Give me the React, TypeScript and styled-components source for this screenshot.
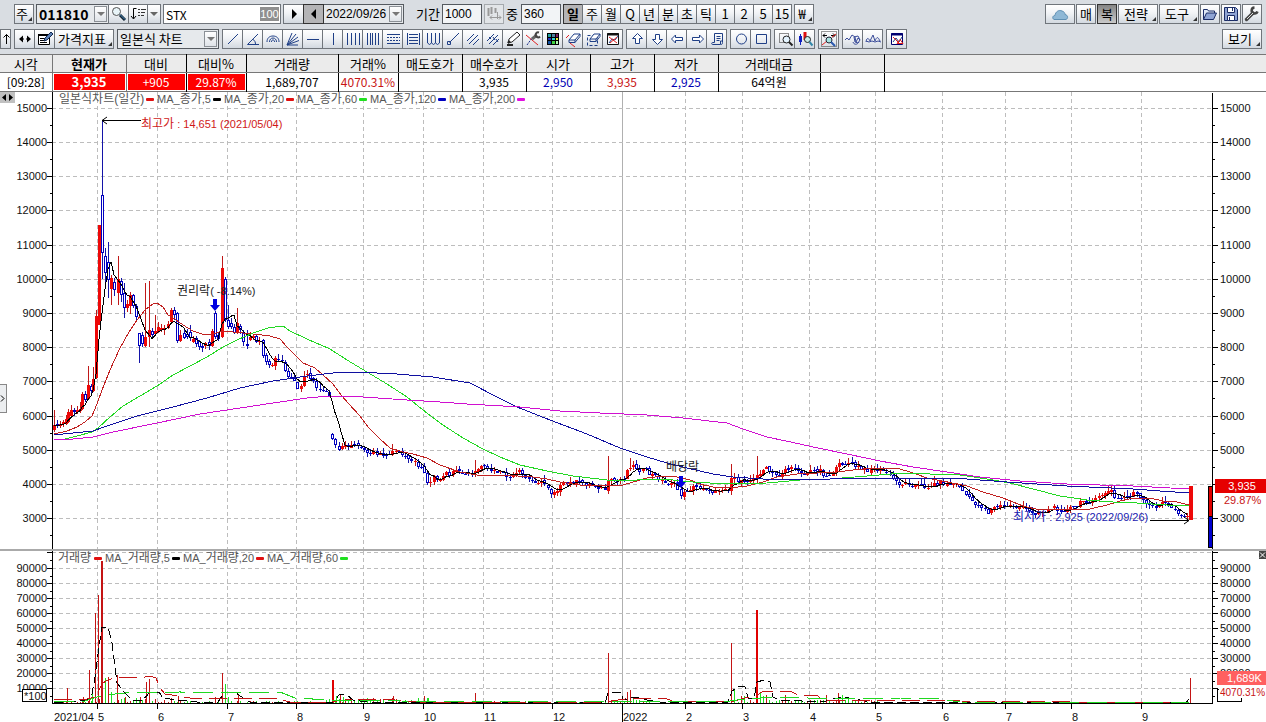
import React, { useLayoutEffect, useRef, useState } from "react";
import styled, { createGlobalStyle, css } from "styled-components";

const UI_FONT = '"Liberation Sans", "Noto Sans CJK KR", sans-serif';
const KR_FONT = '"Noto Sans CJK KR", sans-serif';

const Global = createGlobalStyle`
  *, *::before, *::after { box-sizing: border-box; }
  body { margin: 0; background: #fff; font-family: ${KR_FONT}; font-size: 13px; color: #000; }
  button, input, select { font: inherit; color: inherit; margin: 0; border-radius: 0; }
`;

/* ---------- toolbar parts ---------- */

const Page = styled.div`
  display: flex;
  flex-direction: column;
  min-width: 1200px;
`;

const Toolbars = styled.header`
  display: flex;
  flex-direction: column;
  gap: 5px;
  padding: 4px 4px 5px 0;
  background: #d9dde2;
`;

const Bar = styled.div<{ $gap: number; $start?: number }>`
  display: flex;
  gap: ${(p) => p.$gap}px;
  padding-left: ${(p) => p.$start ?? 0}px;
  height: 20px;
`;

const Group = styled.div`
  display: flex;
  > * + * {
    margin-left: -1px;
  }
`;

const EndGroup = styled.div`
  display: flex;
  gap: 1px;
  margin-left: auto;
`;

const ToolButton = styled.button<{ $w?: number; $tone?: "down" | "dark" | "off"; $menu?: boolean }>`
  position: relative;
  display: flex;
  align-items: center;
  justify-content: center;
  flex: none;
  width: ${(p) => p.$w ?? 21}px;
  height: 20px;
  padding: 0;
  overflow: hidden;
  border: 1px solid #70757b;
  background: linear-gradient(#ffffff, #f1f3f6 45%, #d3d9e0);
  line-height: 18px;
  white-space: nowrap;
  svg {
    flex: none;
  }
  ${(p) =>
    p.$tone === "down" &&
    css`
      background: #b4b4b6;
      border-color: #333;
      font-weight: 700;
    `}
  ${(p) =>
    p.$tone === "dark" &&
    css`
      background: linear-gradient(#858585, #c9c9c9);
      border-color: #333;
    `}
  ${(p) =>
    p.$tone === "off" &&
    css`
      background: #e2e5e8;
      border-color: #a5a9ad;
    `}
  ${(p) =>
    p.$menu &&
    css`
      padding-right: 4px;
      &::after {
        content: "";
        position: absolute;
        right: 1px;
        bottom: 2px;
        border-left: 4px solid transparent;
        border-bottom: 4px solid #333;
      }
    `}
`;

const PickerFrame = styled.span<{ $w: number; $soft?: boolean }>`
  display: flex;
  flex: none;
  align-items: center;
  width: ${(p) => p.$w}px;
  height: 20px;
  padding-right: 1px;
  border: 1px solid #555a60;
  background: ${(p) => (p.$soft ? "#e6e9ec" : "#fff")};
`;

const PickerSelect = styled.select<{ $code?: boolean; $narrow?: boolean }>`
  appearance: none;
  flex: 1;
  min-width: 0;
  height: 18px;
  padding: 0 0 0 2px;
  border: 0;
  background: transparent;
  line-height: 18px;
  ${(p) => p.$code && "font-size: 14px; font-weight: 700;"}
  ${(p) => p.$narrow && `font-family: ${UI_FONT}; font-size: 12px;`}
`;

const DropMark = styled.span`
  display: flex;
  flex: none;
  align-items: center;
  justify-content: center;
  width: 13px;
  height: 16px;
  border: 1px solid #8b9096;
  background: linear-gradient(#fff, #dfe3e8);
  &::after {
    content: "";
    border: 4px solid transparent;
    border-top-color: #777;
    border-bottom: 0;
  }
`;

const NameField = styled.label`
  display: flex;
  align-items: center;
  width: 118px;
  height: 20px;
  padding-right: 1px;
  border: 1px solid #70757b;
  background: #fff;
`;

const BareInput = styled.input`
  flex: 1;
  min-width: 0;
  height: 18px;
  padding: 0 2px;
  border: 0;
  background: transparent;
  font-size: 12px;
`;

const MarginTag = styled.span`
  width: 19px;
  height: 14px;
  background: #8f8f8f;
  color: #fff;
  font-family: ${UI_FONT};
  font-size: 11px;
  line-height: 14px;
  text-align: center;
`;

const NumberInput = styled.input`
  width: 40px;
  height: 20px;
  padding: 0 2px;
  border: 1px solid #555a60;
  background: #f2f4f6;
  font-family: ${UI_FONT};
  font-size: 12px;
`;

const FieldLabel = styled.label<{ $pad?: number; $w: number }>`
  width: ${(p) => p.$w}px;
  padding-left: ${(p) => p.$pad ?? 0}px;
  line-height: 19px;
  white-space: nowrap;
`;

/* ---------- quote table ---------- */

const QuoteTable = styled.table`
  width: 100%;
  table-layout: fixed;
  border-collapse: collapse;
  border-top: 1px solid #777;
  border-bottom: 1px solid #777;
`;

const edge = css<{ $gray?: boolean }>`
  border-right: 1px solid ${(p) => (p.$gray ? "#777" : "#000")};
  &:last-child {
    border-right: 0;
  }
`;

const HeadCell = styled.th<{ $gray?: boolean; $strong?: boolean }>`
  ${edge}
  height: 18px;
  padding: 0;
  border-bottom: 1px solid #777;
  background: #ebebeb;
  font-size: 13px;
  font-weight: ${(p) => (p.$strong ? 700 : 400)};
  line-height: 17px;
  white-space: nowrap;
`;

const ValueCell = styled.td<{ $gray?: boolean }>`
  ${edge}
  height: 19px;
  padding: 1px;
  text-align: center;
  font-size: 12px;
  line-height: 16px;
  white-space: nowrap;
`;

const Value = styled.span<{ $kind?: string }>`
  display: block;
  height: 16px;
  ${(p) => p.$kind === "up" && "background: #ff0000; color: #fff;"}
  ${(p) => p.$kind === "upStrong" && "background: #ff0000; color: #fff; font-weight: 700; font-size: 13px;"}
  ${(p) => p.$kind === "red" && "color: #c81414;"}
  ${(p) => p.$kind === "blue" && "color: #0000b4;"}
`;

/* ---------- chart frame ---------- */

const ChartArea = styled.main`
  position: relative;
`;

const PanelSvg = styled.svg`
  display: block;
  width: 100%;
  font-family: ${UI_FONT};
  font-size: 11px;
  font-kerning: none;
`;

const Divider = styled.div`
  height: 2px;
  background: #aaa;
`;

const ScrollHandle = styled.button`
  position: absolute;
  top: 0;
  left: 0;
  width: 15px;
  height: 11px;
  padding: 0;
  border: 0;
  background: #c0c0c0;
  svg {
    display: block;
  }
`;

const SideHandle = styled.button`
  position: absolute;
  top: 292px;
  left: 0;
  width: 7px;
  height: 29px;
  padding: 0;
  border: 1px solid #888;
  border-left: 0;
  background: #eceef0;
  svg {
    display: block;
  }
`;

/* ---------- icons ---------- */

const NAVY = "#1f3f86";

function Icon({ children }: { children: React.ReactNode }) {
  return (
    <svg width="18" height="18" viewBox="0 0 18 18" fill="none" stroke={NAVY} strokeWidth="1" aria-hidden="true">
      {children}
    </svg>
  );
}

const glyphs: Record<string, React.ReactNode> = {
  search: (
    <>
      <circle cx="6.5" cy="6.5" r="4" fill="#e8f4f8" stroke="#555" />
      <path d="M10 10l5 5" stroke="#123" strokeWidth="3" />
      <path d="M10 9.500l5 5" stroke="#4a90c0" />
    </>
  ),
  sort: (
    <>
      <path d="M4.500 3.500v10M2 11l2.500 3L7 11M4.500 3.500h3" stroke="#000" />
      <path d="M9 4.500h2M12 4.500h5M9 7.500h2M12 7.500h4M9 10.500h2M12 10.500h3" stroke="#333" />
    </>
  ),
  drop: <path d="M5 7h8l-4 4z" fill="#666" stroke="none" />,
  play: <path d="M7 4l5 5-5 5z" fill="#000" stroke="none" />,
  back: <path d="M11 4L6 9l5 5z" fill="#000" stroke="none" />,
  candlesOff: (
    <g stroke="#999">
      <path d="M3.500 3v8M6.500 2v7M10.500 3v5" strokeWidth="2" />
      <path d="M12.500 7v7M5 12.500h11M7 10.500l-2 2 2 2M14 10.500l2 2-2 2" />
    </g>
  ),
  cloud: (
    <path
      d="M3 14.500c-2-1-1.500-4 1-4 .5-4 4-6 7-4.500 2 .5 3 2 3 3.500 3 .5 3.500 4 1 5z"
      fill="#8fb8d6"
      stroke="#5f8fb3"
    />
  ),
  open: (
    <>
      <path d="M2.500 14.500v-10h4l1 1.500h6v2" stroke="#1b2c66" fill="#dfe8f6" />
      <path d="M2.500 14.500l3-6.500h10l-3 6.500z" fill="#8fa4d4" stroke="#1b2c66" />
    </>
  ),
  save: (
    <>
      <path d="M2.500 2.500h11l2 2v11h-13z" fill="#8fa4d4" stroke="#1b2c66" />
      <path d="M5.500 2.500h7v5h-7zM5.500 10.500h7v5h-7z" fill="#fff" stroke="#1b2c66" />
      <path d="M10.500 3v3M7.500 12v3" stroke="#1b2c66" />
    </>
  ),
  wrench: (
    <>
      <path d="M3.500 14.500L10 8" stroke="#444" strokeWidth="3.400" strokeLinecap="round" />
      <path d="M14.500 6.500a3 3 0 1 1-3-4" stroke="#444" strokeWidth="2.600" />
      <path d="M4 14l6-6" stroke="#ddd" />
    </>
  ),
  up: <path d="M9.500 14V4.500M6.500 7.500l3-3 3 3" stroke="#000" />,
  sides: (
    <>
      <path d="M3 9l4-3.500v7zM15 9l-4-3.500v7z" fill="#000" stroke="none" />
      <path d="M6 9h2M10 9h2" stroke="#000" />
    </>
  ),
  note: (
    <>
      <path d="M2.500 4.500h11v10h-11z" fill="#fff" stroke="#000" />
      <path d="M2 5h12" stroke="#000" strokeWidth="2" />
      <path d="M4 8.500h6M4 10.500h5M4 12.500h7" stroke="#000" />
      <path d="M8 11l1-3 6-6 2 2-6 6z" fill="#5b7fb5" stroke="#122850" />
    </>
  ),
  line: <path d="M4 14L14 4" />,
  angle: <path d="M14 4L3.500 14.500H15M9 9.500c2 1 2.500 3 2.500 5" />,
  arcs: <path d="M3 12c0-4 2.500-6 6-6s6 2 6 6M5.500 12c0-2.500 1.500-4 3.500-4s3.500 1.500 3.500 4M7.500 12c0-1.500.5-2 1.500-2s1.500.5 1.500 2" />,
  fan: <path d="M3 15L8 3M3 15l9-11M3 15l11-8M3 15l12-4.500M3 15h11" />,
  hline: <path d="M3 9.500h12" />,
  vline: <path d="M9.500 3v12" />,
  bars4: <path d="M3.500 3v12M7.500 3v12M11.500 3v12M15.500 3v12" />,
  bars5: <path d="M3.500 3v12M6.500 3v12M8.500 3v12M11.500 3v12M14.500 3v12" />,
  rows: (
    <>
      <path d="M3 4.500h13M3 13.500h13" />
      <path d="M3 7.500h13M3 10.500h13" strokeDasharray="2 1" />
    </>
  ),
  rows2: <path d="M3.500 3v12M15.500 3v12M5 4.500h9M5 7.500h9M5 10.500h9M5 13.500h9" />,
  cycle: <path d="M3.500 3v10M7.500 3v10M11.500 3v10M15.500 3v10M3.500 13l2 1.500 2-1.500 2 1.500 2-1.500 2 1.500 2-1.500" />,
  trend: <path d="M5.500 12.500L15 3M3.500 11.500h3v3h-3z" />,
  par3: <path d="M3 11l7-7M5 14l9-9M9 15l6-6" />,
  par3b: <path d="M3 11l7-7M5 14l9-9M9 15l6-6M5 7l2 2M9 7l2 3M12 9l2 3" />,
  pencil: (
    <>
      <path d="M4 13l1-4 8-7 3 3-8 7z" fill="#fff" stroke="#222" />
      <path d="M3 15h6M4 13l2-2" stroke="#222" strokeWidth="2" />
    </>
  ),
  xtool: (
    <>
      <path d="M2 5l12 10" stroke="#e02020" />
      <path d="M3 15l5-7" stroke="#1b2c86" strokeDasharray="2 1" />
      <path d="M8 9l5-4" stroke="#666" strokeWidth="3" />
      <path d="M15 2.500a2.500 2.500 0 1 0 1 4" stroke="#444" strokeWidth="2" />
    </>
  ),
  palette: (
    <>
      <path d="M3 3h12v12H3z" fill="#000" stroke="none" />
      <path d="M4 4h3v3H4z" fill="#20a0a0" stroke="none" />
      <path d="M8 4h3v3H8z" fill="#5080a0" stroke="none" />
      <path d="M12 4h2v3h-2z" fill="#802060" stroke="none" />
      <path d="M4 8h3v2H4z" fill="#2030c0" stroke="none" />
      <path d="M8 8h3v2H8z" fill="#30d0d0" stroke="none" />
      <path d="M12 8h2v2h-2z" fill="#e8e840" stroke="none" />
      <path d="M4 11h3v3H4z" fill="#1050a0" stroke="none" />
      <path d="M8 11h3v3H8z" fill="#40d040" stroke="none" />
      <path d="M12 11h2v3h-2z" fill="#b0ffb0" stroke="none" />
    </>
  ),
  erase: (
    <>
      <path d="M2 8l3-3M6 13l5 4" stroke="#e02020" />
      <path d="M5 10l5-6h6l-5 6z" fill="#fff" />
      <path d="M5 10v2.500h6l5-6V4M11 10v2.500" />
    </>
  ),
  eraseAll: (
    <>
      <path d="M3.500 5.500h10v10h-10z" strokeDasharray="3 2" />
      <path d="M6 9l4-5h6l-4 5z" fill="#fff" />
      <path d="M6 9v2.500h6l4-5V4M12 9v2.500" />
    </>
  ),
  chartX: (
    <>
      <path d="M3.500 3.500h11v11h-11z" fill="#fff" stroke="#111" />
      <path d="M3 4.500h12" stroke="#111" strokeWidth="2" />
      <path d="M5 13l3-4 3 1 3-4" />
      <path d="M5 7l8 6M13 7l-7 6" stroke="#e02020" />
    </>
  ),
  aUp: <path d="M9.500 3.500l5 5h-3v5h-4v-5h-3z" fill="#fff" />,
  aDown: <path d="M9.500 14.500l5-5h-3v-5h-4v5h-3z" fill="#fff" />,
  aLeft: <path d="M3.500 9l4-4v2.500h7v3h-7V13z" fill="#fff" />,
  aRight: <path d="M15.500 9l-4-4v2.500h-7v3h7V13z" fill="#fff" />,
  script: <path d="M6.500 3.500h8v9c0 2-1 2-2 2h-8c-1 0-1-2 0-2h2zM8.500 6.500h4M8.500 8.500h4M8.500 10.500h3M12.500 14v-3h2" />,
  circle: <circle cx="9.500" cy="9" r="5" />,
  square: <path d="M4.500 4.500h10v9h-10z" />,
  zoomArea: (
    <>
      <path d="M3.500 3.500h9v9h-9z" stroke="#222" strokeDasharray="1 1" />
      <circle cx="10.500" cy="9.500" r="3.500" fill="#e4f4ff" stroke="#222" />
      <path d="M13 12l3.500 3.500" stroke="#222" strokeWidth="2" />
    </>
  ),
  zoomCandle: (
    <>
      <path d="M4.500 4v11" stroke="#1020c0" />
      <path d="M4.500 6v6" stroke="#1020c0" strokeWidth="3" />
      <path d="M9 2v8" stroke="#e01010" strokeWidth="3" />
      <circle cx="11.500" cy="9.500" r="3" fill="#c8ece8" stroke="#222" />
      <path d="M13.500 12l3 3.500" stroke="#3388aa" strokeWidth="2" />
    </>
  ),
  zoomFit: (
    <>
      <path d="M1.500 1.500h15v15h-15z" stroke="#333" strokeDasharray="1 1" />
      <path d="M3 5.500h4M11 5.500h4M5 3.500l-2 2 2 2M13 3.500l2 2-2 2" stroke="#000" />
      <path d="M2 15l5-4M12 7l4-3" stroke="#e02020" />
      <circle cx="9" cy="10" r="3" fill="#a8e4e0" stroke="#223" />
      <path d="M11 12l4 4" stroke="#2a5ab0" strokeWidth="2" />
    </>
  ),
  waveEdit: <path d="M1 10l2-2 2 2 3-5 3 2 1 5 2-4 2 2M9 12c1 3 4 3 6 0M10 7l4-1 2 4-2 3-3-1z" stroke="#3a4c9a" />,
  wave: <path d="M2 12c1-6 3-3 4-1l3-6 2 6c2-5 3-4 5 0M2 11l3 1 3-1 3 1 3-1 3 1" stroke="#3a4c9a" />,
  indicator: (
    <>
      <path d="M3.500 3.500h11v11h-11z" fill="#fff" stroke="#000070" />
      <path d="M3 4.500h12" stroke="#000070" strokeWidth="2" />
      <path d="M5 12l3-4 3 4 3-5" />
      <path d="M5 7l6 6M9 13.500l3-4 3 4z" stroke="#e02020" />
    </>
  ),
};

function IconButton({ name, label, ...rest }: { name: string; label: string; $w?: number; $tone?: "down" | "dark" | "off"; $menu?: boolean }) {
  return (
    <ToolButton type="button" aria-label={label} {...rest}>
      <Icon>{glyphs[name]}</Icon>
    </ToolButton>
  );
}

const drawTools = [
  "line", "angle", "arcs", "fan", "hline", "vline", "bars4", "bars5", "rows", "rows2",
  "cycle", "trend", "par3", "par3b", "pencil", "xtool", "palette", "erase", "eraseAll", "chartX",
];
const periods = ["일", "주", "월", "Q", "년", "분", "초", "틱", "1", "2", "5", "15"];

/* ---------- data ---------- */

const quotes: { head: string; value: string; w?: number; kind?: string; gray?: boolean }[] = [
  { head: "시각", value: "[09:28]", w: 52, gray: true },
  { head: "현재가", value: "3,935", w: 74, kind: "upStrong", gray: true },
  { head: "대비", value: "+905", w: 60, kind: "up" },
  { head: "대비%", value: "29.87%", w: 60, kind: "up" },
  { head: "거래량", value: "1,689,707", w: 92 },
  { head: "거래%", value: "4070.31%", w: 60, kind: "red" },
  { head: "매도호가", value: "", w: 64 },
  { head: "매수호가", value: "3,935", w: 64 },
  { head: "시가", value: "2,950", w: 64, kind: "blue" },
  { head: "고가", value: "3,935", w: 64, kind: "red" },
  { head: "저가", value: "2,925", w: 64, kind: "blue" },
  { head: "거래대금", value: "64억원", w: 102 },
  { head: "", value: "", w: 64 },
  { head: "", value: "" },
];

type Pt = [number, number];

/* Series are stored on a 1266-unit wide sheet; the panels stretch the part between the axes. */
const months: [number, string][] = [
  [97, "5"], [157, "6"], [227, "7"], [296, "8"], [363, "9"], [423, "10"], [483, "11"], [552, "12"], [622, "2022"],
  [685, "2"], [742, "3"], [809, "4"], [875, "5"], [942, "6"], [1005, "7"], [1071, "8"], [1141, "9"],
];

const ma20: Pt[] = [[54,434],[67,431],[77,427],[85,422],[92,416],[97,404],[102,390],[110,370],[120,348],[129,332],[137,320],[145,310],[153,304],[157,303],[163,307],[168,315],[175,319],[183,325],[193,331],[202,334],[213,334],[222,331],[233,332],[253,334],[270,336],[280,339],[287,347],[295,355],[303,363],[315,368],[323,375],[333,384],[342,396],[348,403],[360,416],[368,427],[380,439],[390,448],[403,452],[413,454],[427,458],[440,465],[460,472],[477,475],[503,475],[533,477],[547,479],[560,482],[580,485],[603,486],[623,485],[633,482],[647,478],[663,476],[677,477],[690,480],[700,484],[713,487],[730,488],[747,486],[763,482],[777,477],[797,474],[817,473],[837,472],[853,470],[877,468],[897,468],[913,473],[927,478],[947,482],[967,486],[983,492],[1003,498],[1023,506],[1040,510],[1060,509],[1073,510],[1090,509],[1107,505],[1120,501],[1133,498],[1150,498],[1163,501],[1177,502],[1189,505]];
const ma60: Pt[] = [[54,439],[65,439],[77,436],[92,432],[98,428],[110,417],[123,406],[140,396],[157,386],[173,375],[190,366],[207,357],[223,347],[237,340],[253,333],[268,328],[283,326],[290,331],[307,339],[330,349],[347,360],[367,372],[387,384],[407,397],[423,410],[443,425],[463,438],[483,449],[500,457],[520,465],[547,471],[573,476],[607,480],[627,481],[647,479],[673,480],[693,482],[727,484],[767,483],[800,480],[830,479],[867,476],[903,473],[930,474],[960,475],[987,479],[1010,483],[1033,489],[1060,496],[1087,500],[1113,502],[1137,503],[1167,505],[1189,505]];
const ma120: Pt[] = [[54,435],[73,433],[93,431],[107,426],[137,416],[173,407],[207,398],[240,388],[273,381],[307,376],[333,373],[357,372],[397,374],[433,377],[470,383],[497,397],[517,407],[550,420],[587,434],[620,448],[647,457],[667,463],[687,468],[713,474],[733,477],[763,479],[800,479],[830,479],[897,478],[967,479],[1007,482],[1067,486],[1133,489],[1160,491],[1189,493]];
const ma200: Pt[] = [[54,440],[73,439],[93,437],[113,432],[157,423],[200,414],[240,408],[273,403],[307,398],[330,396],[363,397],[407,400],[440,402],[467,404],[520,407],[560,411],[600,413],[647,415],[683,418],[727,423],[743,429],[767,437],[800,444],[813,447],[847,454],[880,461],[913,467],[947,472],[980,477],[1020,481],[1067,484],[1133,486],[1189,489]];

type Candle = { x: number; o: number; c: number; h: number; l: number };

const spring: [number, number, number, number, number][] = [
  [54,430,425,410,432],[57,424,426,420,428],[60,426,424,421,428],[63,424,422,420,427],[66,424,419,415,425],[68,422,412,409,423],
  [71,416,410,405,417],[74,410,412,408,416],[77,412,410,406,414],[80,411,409,402,413],[82,409,394,392,410],[85,394,400,391,402],
  [88,399,385,366,400],[91,386,391,384,393],[93,391,379,367,392],[96,378,316,310,379],[99,325,225,225,325],[102,195,253,121,279],
  [105,256,273,248,283],[108,262,280,242,298],[111,289,278,275,305],[114,282,290,278,296],[118,293,279,256,305],[121,281,295,278,302],
  [124,293,308,283,318],[127,308,304,300,312],[130,306,295,292,314],[133,295,306,294,308],[136,306,317,304,320],[139,333,346,333,363],
  [142,335,344,332,347],[145,346,337,283,347],[149,337,330,281,347],[152,331,335,328,337],[155,334,331,315,336],[158,332,327,322,333],
  [161,330,328,324,332],[164,330,328,325,335],[168,328,324,321,329],[171,322,310,308,323],[174,310,315,307,320],[177,313,341,312,343],
  [180,341,335,330,342],[184,333,338,330,339],[187,334,337,329,339],[190,332,338,325,341],[193,342,339,336,343],[196,338,344,336,347],
  [199,341,347,340,350],[202,346,348,344,352],[205,346,343,342,349],[209,342,346,339,350],[212,346,331,329,347],[215,313,337,311,339],
  [218,335,339,332,341],[222,337,268,256,338],[225,279,320,277,322],[228,320,327,305,329],[231,323,327,318,329],[234,327,333,324,334],
  [237,333,323,308,334],[240,326,330,324,334],[243,332,342,330,346],[247,344,346,330,349],[250,340,337,332,341],
];

const closes: Pt[] = [[252,338],[256,340],[260,344],[262,355],[265,362],[270,366],[274,363],[276,358],[279,362],[282,361],[285,370],[288,376],[291,379],[295,378],[298,390],[301,385],[303,374],[306,373],[310,378],[314,383],[318,390],[322,390],[326,391],[330,400],[332,440],[335,444],[338,453],[342,447],[346,445],[352,444],[358,447],[365,450],[375,453],[383,454],[389,457],[392,450],[396,449],[402,455],[408,461],[414,463],[418,466],[422,467],[425,477],[428,482],[432,482],[434,476],[437,481],[441,480],[446,474],[452,474],[456,472],[460,473],[465,475],[472,475],[477,469],[482,467],[486,470],[492,471],[498,472],[505,475],[510,478],[514,478],[516,474],[520,471],[524,478],[530,480],[537,481],[542,483],[546,484],[551,493],[554,491],[560,487],[566,484],[572,482],[580,483],[590,485],[598,487],[605,489],[608,481],[612,481],[618,481],[623,478],[627,470],[630,465],[634,466],[640,470],[646,472],[652,475],[658,478],[663,482],[666,485],[670,480],[674,485],[678,490],[680,494],[684,494],[688,489],[695,487],[702,488],[706,488],[710,493],[716,489],[724,489],[729,489],[732,478],[737,481],[745,479],[753,480],[756,476],[760,472],[765,468],[771,474],[778,476],[782,472],[786,468],[790,470],[796,467],[800,471],[804,474],[810,472],[817,470],[821,470],[825,477],[832,473],[838,467],[840,462],[844,463],[850,463],[856,467],[862,470],[868,470],[872,468],[878,470],[885,471],[892,478],[898,483],[902,484],[908,483],[914,485],[920,486],[928,487],[934,484],[942,483],[950,484],[958,484],[962,491],[966,496],[970,500],[976,504],[984,508],[988,513],[992,508],[1000,506],[1008,506],[1014,506],[1022,508],[1030,512],[1038,513],[1046,510],[1054,508],[1062,510],[1070,509],[1078,505],[1082,500],[1090,502],[1096,500],[1102,494],[1107,491],[1111,491],[1116,501],[1122,497],[1128,497],[1134,492],[1140,499],[1146,505],[1154,507],[1162,503],[1170,506],[1176,511],[1182,514],[1187,517]];

/* days whose high runs far above the body */
const spikes: Record<number, number> = { 392: 444, 474: 460, 608: 456, 629: 458, 731: 464, 757: 456, 847: 458, 933: 476, 1127: 490 };

function noise(i: number) {
  const v = Math.sin(i * 12.9898) * 43758.5453;
  return v - Math.floor(v);
}

function valueAt(points: Pt[], x: number) {
  for (let i = 1; i < points.length; i++) {
    if (x <= points[i][0]) {
      const [x0, y0] = points[i - 1];
      const [x1, y1] = points[i];
      return y0 + ((y1 - y0) * (x - x0)) / (x1 - x0 || 1);
    }
  }
  return points[points.length - 1][1];
}

function buildCandles(): Candle[] {
  const list: Candle[] = spring.map(([x, o, c, h, l]) => ({ x, o, c, h, l }));
  let prev = 338;
  for (let i = 0; i < 296; i++) {
    const raw = 253 + i * 3.167;
    const x = Math.round(raw);
    const gap = x >= 332 && prev < 420;
    const c = Math.round(valueAt(closes, raw) + (noise(i) - 0.5) * 5);
    let o = gap ? 434 : Math.round(prev + (noise(i + 500) - 0.5) * 3);
    if (Math.abs(raw - 608) < 1.58) o = 491;
    if (Math.abs(raw - 731) < 1.58) o = 491;
    let h = Math.min(o, c) - Math.round(noise(i + 900) * 5);
    const l = Math.max(o, c) + Math.round(noise(i + 1300) * 4);
    for (const key of Object.keys(spikes)) if (Math.abs(Number(key) - raw) < 1.58) h = spikes[Number(key)];
    list.push({ x, o, c, h, l });
    prev = c;
  }
  list.push({ x: 1190, o: 520, c: 486, h: 486, l: 520 });
  return list;
}

const candles = buildCandles();
const ma5: Pt[] = candles.slice(0, -1).map((d, i) => {
  const part = candles.slice(Math.max(0, i - 4), i + 1);
  return [d.x, part.reduce((s, p) => s + p.c, 0) / part.length];
});

const vol5: Pt[] = [[54,702],[67,702],[87,700],[92,694],[95,677],[99,647],[102,627],[108,627],[112,643],[117,683],[125,693],[132,700],[143,700],[150,692],[159,692],[163,698],[177,700],[197,702],[218,702],[224,693],[235,692],[240,696],[250,702],[333,702],[340,694],[347,695],[353,700],[367,702],[605,703],[608,693],[621,692],[623,700],[635,697],[647,700],[660,702],[728,702],[732,691],[740,686],[745,687],[748,698],[754,698],[757,682],[764,680],[770,682],[773,697],[780,700],[823,702],[833,699],[843,697],[860,700],[870,702],[1186,703],[1189,699]];
const vol20: Pt[] = [[54,699],[83,700],[95,697],[99,690],[103,683],[108,680],[117,677],[140,678],[150,676],[156,678],[160,688],[165,694],[178,696],[190,698],[218,699],[235,698],[275,698],[290,702],[330,702],[345,700],[365,699],[395,700],[420,702],[605,702],[612,701],[625,699],[640,698],[665,698],[672,701],[730,702],[745,698],[757,695],[762,692],[790,691],[798,695],[817,695],[822,700],[880,700],[960,701],[1189,703]];
const vol60: Pt[] = [[54,701],[85,701],[97,697],[105,695],[125,693],[180,692],[215,693],[230,692],[280,692],[295,698],[330,700],[400,701],[600,702],[640,701],[730,701],[745,699],[775,697],[795,697],[820,699],[860,698],[900,698],[940,699],[960,702],[1189,703]];

const RED_BAR = "#c41414";
const GREEN_BAR = "#22e022";
const bigBars: [number, number, string, number][] = [
  [67,688,RED_BAR,1],[83,697,RED_BAR,1],[89,670,RED_BAR,1],[92,693,GREEN_BAR,1],[95,613,RED_BAR,1],[98,595,RED_BAR,1],[101,561,RED_BAR,2],
  [105,678,GREEN_BAR,1],[108,677,RED_BAR,1],[111,692,GREEN_BAR,1],[117,675,RED_BAR,1],[121,699,GREEN_BAR,1],[125,697,RED_BAR,1],
  [140,697,RED_BAR,1],[146,682,RED_BAR,1],[149,679,RED_BAR,1],[171,698,RED_BAR,1],[178,696,RED_BAR,1],[215,697,RED_BAR,1],
  [222,673,RED_BAR,1],[225,684,GREEN_BAR,1],[228,697,GREEN_BAR,1],[238,694,RED_BAR,1],[332,680,"#e00000",2],[336,696,GREEN_BAR,1],
  [340,694,RED_BAR,1],[343,697,GREEN_BAR,1],[393,696,RED_BAR,1],[424,696,RED_BAR,1],[427,698,GREEN_BAR,2],[475,693,RED_BAR,1],
  [608,653,RED_BAR,1],[627,692,RED_BAR,1],[630,690,RED_BAR,1],
  [633,697,GREEN_BAR,1],[731,643,RED_BAR,1],[734,690,GREEN_BAR,1],[741,696,RED_BAR,1],[744,696,GREEN_BAR,1],[756,610,"#e00000",2],
  [760,693,GREEN_BAR,1],[763,696,GREEN_BAR,1],[766,695,RED_BAR,1],[785,695,RED_BAR,1],[826,695,RED_BAR,1],[838,693,RED_BAR,1],
  [842,695,GREEN_BAR,1],[848,697,GREEN_BAR,1],[1190,678,RED_BAR,1],
];

function quietHeight(x: number) {
  if (x < 97) return 2;
  if (x < 165) return 4;
  if (x < 325) return 2;
  if (x < 420) return 4;
  if (x < 600) return 2;
  if (x < 650) return 3;
  if (x < 730) return 1;
  if (x < 880) return 3;
  return 1;
}

const quietBars = candles.slice(0, -1).map((d, i) => ({
  x: d.x,
  h: Math.max(1, Math.round(quietHeight(d.x) * (0.5 + noise(i + 77)))),
  color: d.c < d.o ? RED_BAR : GREEN_BAR,
}));

/* ---------- charts ---------- */

const LEFT = 52;
const GRID = "#bdbdbd";

function useWidth() {
  const ref = useRef<HTMLElement>(null);
  const [width, setWidth] = useState(1266);
  useLayoutEffect(() => {
    const el = ref.current;
    if (!el) return;
    const read = () => setWidth(el.clientWidth);
    read();
    const watch = new ResizeObserver(read);
    watch.observe(el);
    return () => watch.disconnect();
  }, []);
  return { ref, width };
}

const makeScale = (width: number) => (x: number) => LEFT + ((x - LEFT) * (width - 106)) / 1160;

function Trace({ points, sx, color, dash }: { points: Pt[]; sx: (x: number) => number; color: string; dash?: string }) {
  return (
    <polyline
      points={points.map(([x, y]) => `${sx(x)},${y}`).join(" ")}
      fill="none"
      stroke={color}
      strokeDasharray={dash}
      shapeRendering="crispEdges"
    />
  );
}

type LegendItem = { x: number; name: string; korean: string; tail: string; mark: number; color: string };

function Legend({ items, y }: { items: LegendItem[]; y: number }) {
  return (
    <g fill="#555">
      {items.map((it) => (
        <React.Fragment key={it.x}>
          <text x={it.x} y={y}>
            {it.name}
            <tspan fontSize="12">{it.korean}</tspan>
            {it.tail}
          </text>
          <rect x={it.mark} y={y - 5} width="8" height="3" rx="1" fill={it.color} />
        </React.Fragment>
      ))}
    </g>
  );
}

function MonthLines({ sx, top, bottom }: { sx: (x: number) => number; top: number; bottom: number }) {
  return (
    <g shapeRendering="crispEdges">
      {months.map(([x, name]) => {
        const px = Math.round(sx(x)) + 0.5;
        const year = name === "2022";
        return <line key={x} x1={px} x2={px} y1={top} y2={bottom} stroke={year ? "#b0b0b0" : GRID} strokeDasharray={year ? undefined : "4 3"} />;
      })}
    </g>
  );
}

function PricePanel({ width }: { width: number }) {
  const sx = makeScale(width);
  const right = width - 54;
  const levels = Array.from({ length: 13 }, (_, i) => ({ label: 15000 - i * 1000, y: Math.round(107.7 + i * 34.2) }));
  return (
    <PanelSvg height="457" viewBox={`0 92 ${width} 457`} role="img" aria-label="일본식차트(일간)">
      <MonthLines sx={sx} top={92} bottom={549} />
      <g shapeRendering="crispEdges">
        {levels.map(({ label, y }) => (
          <g key={label}>
            <line x1={LEFT} x2={right} y1={y + 0.5} y2={y + 0.5} stroke={GRID} strokeDasharray="4 3" />
            <path d={`M${LEFT - 5} ${y + 0.5}h5M${right} ${y + 0.5}h6M${LEFT - 2} ${y + 17.5}h2M${right} ${y + 17.5}h3`} stroke="#000" />
          </g>
        ))}
        <path d={`M${LEFT + 0.5} 92V549M${right + 0.5} 93V549`} stroke="#000" />
      </g>
      <g fill="#111">
        {levels.map(({ label, y }) => (
          <React.Fragment key={label}>
            <text x={47} y={y + 4} textAnchor="end">{label}</text>
            {label !== 4000 && <text x={right + 8} y={y + 4}>{label}</text>}
          </React.Fragment>
        ))}
      </g>
      <Legend
        y={103}
        items={[
          { x: 59, name: "", korean: "일본식차트(일간)", tail: "", mark: 146, color: "#e01010" },
          { x: 157, name: "MA_", korean: "종가", tail: ",5", mark: 213, color: "#000" },
          { x: 224, name: "MA_", korean: "종가", tail: ",20", mark: 286, color: "#e01010" },
          { x: 297, name: "MA_", korean: "종가", tail: ",60", mark: 359, color: "#20e020" },
          { x: 370, name: "MA_", korean: "종가", tail: ",120", mark: 438, color: "#0000c0" },
          { x: 449, name: "MA_", korean: "종가", tail: ",200", mark: 517, color: "#e010e0" },
        ]}
      />
      <g shapeRendering="crispEdges">
        {candles.map((d, i) => {
          const x = Math.round(sx(d.x));
          const up = d.c < d.o;
          const top = Math.min(d.o, d.c);
          const tall = Math.max(1, Math.abs(d.c - d.o));
          return (
            <g key={i}>
              <line x1={x + 0.5} x2={x + 0.5} y1={d.h} y2={d.l} stroke={up ? "#c01818" : "#1414a8"} />
              {up ? (
                <rect x={x - 1} y={top} width={i === candles.length - 1 ? 4 : 3} height={tall} fill="#ee0808" />
              ) : tall > 2 ? (
                <rect x={x - 0.5} y={top + 0.5} width="2" height={tall - 1} fill="#fff" stroke="#0000c0" />
              ) : (
                <rect x={x - 1} y={top} width="3" height={tall} fill="#0000c0" />
              )}
            </g>
          );
        })}
      </g>
      <Trace points={ma5} sx={sx} color="#000" />
      <Trace points={ma20} sx={sx} color="#c02020" />
      <Trace points={ma60} sx={sx} color="#22d822" />
      <Trace points={ma120} sx={sx} color="#1010a0" />
      <Trace points={ma200} sx={sx} color="#d010d0" />

      <text x={sx(177)} y={295} fill="#222">
        <tspan fontSize="12">권리락</tspan>( -8.14%)
      </text>
      <text x={sx(666)} y={471} fontSize="12" fill="#222">배당락</text>
      <text x={sx(1013)} y={521} fill="#2020b0">
        <tspan fontSize="12">최저가</tspan> : 2,925 (2022/09/26)
      </text>

      <g stroke="#000" fill="none">
        <path d={`M${sx(102)} 120.500H${sx(141)}M${sx(102) + 5} 117l-5 3.500 5 3.500`} />
        <path d={`M${sx(1150)} 520.500H${sx(1189)}M${sx(1189) - 5} 517l5 3.500-5 3.500`} />
      </g>
      <text x={sx(141)} y={128} fill="#d01818">
        <tspan fontSize="12">최고가</tspan> : 14,651 (2021/05/04)
      </text>
      <g fill="#0000e0">
        <path d={`M${sx(215) - 2} 299h4v6h3l-5 6-5-6h3z`} />
        <path d={`M${sx(681) - 2} 476h4v6h3l-5 6-5-6h3z`} />
      </g>

      <g stroke="#000" shapeRendering="crispEdges">
        <rect x={right - 3.5} y="486.500" width="4" height="30" fill="#e00000" />
        <rect x={right - 3.5} y="516.500" width="4" height="31" fill="#0000d0" />
      </g>
      <rect x={right + 3} y="479" width="51" height="14" fill="#e60000" />
      <text x={right + 30} y="490" textAnchor="middle" fill="#fff">3,935</text>
      <text x={right + 12} y="504" fill="#c81414">29.87%</text>
    </PanelSvg>
  );
}

function VolumePanel({ width }: { width: number }) {
  const sx = makeScale(width);
  const right = width - 54;
  const levels = Array.from({ length: 10 }, (_, i) => ({ label: 100000 - i * 10000, y: i === 0 ? 552 : Math.round(553 + i * 15.05) }));
  return (
    <PanelSvg height="171" viewBox={`0 551 ${width} 171`} role="img" aria-label="거래량">
      <MonthLines sx={sx} top={551} bottom={704} />
      <g shapeRendering="crispEdges">
        {levels.map(({ label, y }) => (
          <g key={label}>
            <line x1={LEFT} x2={right} y1={y + 0.5} y2={y + 0.5} stroke={GRID} strokeDasharray="4 3" />
            <path d={`M${LEFT - 5} ${y + 0.5}h5M${right} ${y + 0.5}h6M${LEFT - 2} ${y + 8.5}h2M${right} ${y + 8.5}h3`} stroke="#000" />
          </g>
        ))}
      </g>
      <g fill="#111">
        {levels.slice(1).map(({ label, y }) => (
          <React.Fragment key={label}>
            <text x={47} y={y + 4} textAnchor="end">{label}</text>
            {label !== 10000 && <text x={right + 8} y={y + 4}>{label}</text>}
          </React.Fragment>
        ))}
      </g>
      <Legend
        y={562}
        items={[
          { x: 58, name: "", korean: "거래량", tail: "", mark: 94, color: "#e01010" },
          { x: 105, name: "MA_", korean: "거래량", tail: ",5", mark: 172, color: "#000" },
          { x: 183, name: "MA_", korean: "거래량", tail: ",20", mark: 256, color: "#e01010" },
          { x: 267, name: "MA_", korean: "거래량", tail: ",60", mark: 340, color: "#20e020" },
        ]}
      />
      <g shapeRendering="crispEdges">
        {quietBars.map((b, i) => (
          <rect key={i} x={Math.round(sx(b.x))} y={704 - b.h} width="1" height={b.h} fill={b.color} />
        ))}
        {bigBars.map(([x, y, color, w]) => (
          <rect key={x} x={Math.round(sx(x))} y={y} width={w} height={704 - y} fill={color} />
        ))}
      </g>
      <Trace points={vol5} sx={sx} color="#000" dash="9 4" />
      <Trace points={vol20} sx={sx} color="#c41414" dash="18 7" />
      <Trace points={vol60} sx={sx} color="#20d820" dash="20 8" />

      <g shapeRendering="crispEdges" stroke="#000">
        <path d={`M${LEFT + 0.5} 551V704M${right + 0.5} 551V704`} />
        <path d={`M${LEFT} 703.500H${right + 1}`} />
        {months.map(([x, name]) => {
          const px = Math.round(sx(x)) + 0.5;
          return <line key={x} x1={px} x2={px} y1="704" y2={name === "2022" ? 722 : 709} />;
        })}
      </g>
      <g fill="#111">
        <text x="54" y="721">2021/04</text>
        {months.map(([x, name]) => (
          <text key={x} x={Math.round(sx(x)) + 1} y="721">{name}</text>
        ))}
      </g>
      <rect x="22.500" y="689.500" width="24" height="12" fill="#fff" stroke="#000" />
      <text x="24" y="700" fill="#111">*100</text>
      <rect x={right + 5.5} y="689.500" width="24" height="12" fill="#fff" stroke="#000" />
      <rect x={right + 5} y="671" width="49" height="14" fill="#ff6060" />
      <text x={right + 15} y="682" fill="#fff">1,689K</text>
      <rect x={right + 7} y="686" width="47" height="12" fill="#fff" />
      <text x={right + 8} y="696" fontSize="10" fill="#c81414">4070.31%</text>
      <rect x={right + 47} y="551" width="7" height="8" fill="#444" />
      <path d={`M${right + 48} 552.500l5 5M${right + 53} 552.500l-5 5`} stroke="#fff" />
    </PanelSvg>
  );
}

/* ---------- page ---------- */

function Picker({ w, label, value, code, narrow, soft }: { w: number; label: string; value: string; code?: boolean; narrow?: boolean; soft?: boolean }) {
  return (
    <PickerFrame $w={w} $soft={soft}>
      <PickerSelect aria-label={label} $code={code} $narrow={narrow}>
        <option>{value}</option>
      </PickerSelect>
      <DropMark />
    </PickerFrame>
  );
}

export default function App() {
  const { ref, width } = useWidth();
  return (
    <Page>
      <Global />
      <Toolbars>
        <Bar $gap={2} $start={14}>
          <ToolButton type="button" $w={20} $menu>주</ToolButton>
          <Group>
            <Picker w={73} label="종목코드" value="011810" code soft />
            <IconButton name="search" label="종목 검색" />
            <IconButton name="sort" label="정렬" $w={20} />
            <IconButton name="drop" label="정렬 메뉴" $w={14} />
          </Group>
          <NameField>
            <BareInput aria-label="종목명" defaultValue="STX" />
            <MarginTag>100</MarginTag>
          </NameField>
          <Group>
            <IconButton name="play" label="다음" />
            <IconButton name="back" label="이전" $tone="down" />
            <Picker w={81} label="날짜" value="2022/09/26" narrow soft />
          </Group>
          <FieldLabel htmlFor="span" $w={34} $pad={10}>기간</FieldLabel>
          <NumberInput id="span" defaultValue="1000" />
          <IconButton name="candlesOff" label="봉 간격" $w={20} $tone="off" />
          <FieldLabel htmlFor="shown" $w={13}>중</FieldLabel>
          <NumberInput id="shown" defaultValue="360" />
          <Group>
            {periods.map((p, i) => (
              <ToolButton key={p} type="button" $w={20} $tone={i === 0 ? "down" : undefined}>{p}</ToolButton>
            ))}
          </Group>
          <ToolButton type="button" $w={20} $menu>₩</ToolButton>
          <EndGroup>
            <IconButton name="cloud" label="클라우드" $w={30} />
            <ToolButton type="button" $w={20}>매</ToolButton>
            <ToolButton type="button" $w={20} $tone="dark">복</ToolButton>
            <ToolButton type="button" $w={40} $menu>전략</ToolButton>
            <ToolButton type="button" $w={40} $menu>도구</ToolButton>
            <IconButton name="open" label="열기" $w={20} />
            <IconButton name="save" label="저장" $w={20} />
            <IconButton name="wrench" label="설정" $w={20} />
          </EndGroup>
        </Bar>
        <Bar $gap={3}>
          <IconButton name="up" label="접기" $w={11} />
          <Group>
            <IconButton name="sides" label="너비 조절" />
            <IconButton name="note" label="편집" />
            <ToolButton type="button" $w={60} $menu>가격지표</ToolButton>
          </Group>
          <Picker w={102} label="차트 종류" value="일본식 차트" soft />
          <Group>
            {drawTools.map((n) => (
              <IconButton key={n} name={n} label={n} />
            ))}
          </Group>
          <Group>
            <IconButton name="aUp" label="위 화살표" />
            <IconButton name="aDown" label="아래 화살표" />
            <IconButton name="aLeft" label="왼쪽 화살표" />
            <IconButton name="aRight" label="오른쪽 화살표" />
            <IconButton name="script" label="메모" />
          </Group>
          <Group>
            <IconButton name="circle" label="원" />
            <IconButton name="square" label="사각형" />
          </Group>
          <Group>
            <IconButton name="zoomArea" label="영역 확대" />
            <IconButton name="zoomCandle" label="봉 확대" />
          </Group>
          <IconButton name="zoomFit" label="전체 보기" />
          <Group>
            <IconButton name="waveEdit" label="파동 편집" />
            <IconButton name="wave" label="파동" />
          </Group>
          <IconButton name="indicator" label="지표" />
          <EndGroup>
            <ToolButton type="button" $w={40} $menu>보기</ToolButton>
          </EndGroup>
        </Bar>
      </Toolbars>

      <QuoteTable>
        <colgroup>
          {quotes.map((q, i) => (
            <col key={i} width={q.w} />
          ))}
        </colgroup>
        <thead>
          <tr>
            {quotes.map((q, i) => (
              <HeadCell key={i} scope="col" $gray={q.gray} $strong={q.kind === "upStrong"}>{q.head}</HeadCell>
            ))}
          </tr>
        </thead>
        <tbody>
          <tr>
            {quotes.map((q, i) => (
              <ValueCell key={i} $gray={q.gray}>
                <Value $kind={q.kind}>{q.value}</Value>
              </ValueCell>
            ))}
          </tr>
        </tbody>
      </QuoteTable>

      <ChartArea ref={ref}>
        <PricePanel width={width} />
        <Divider />
        <VolumePanel width={width} />
        <ScrollHandle type="button" aria-label="차트 이동">
          <svg width="15" height="11" viewBox="0 0 15 11">
            <path d="M6 2v7L2 5.500zM9 2v7l4-3.500z" fill="#000" />
          </svg>
        </ScrollHandle>
        <SideHandle type="button" aria-label="패널 열기">
          <svg width="6" height="27" viewBox="0 0 6 27">
            <path d="M1 10.500l3 3-3 3" fill="none" stroke="#000" />
          </svg>
        </SideHandle>
      </ChartArea>
    </Page>
  );
}
